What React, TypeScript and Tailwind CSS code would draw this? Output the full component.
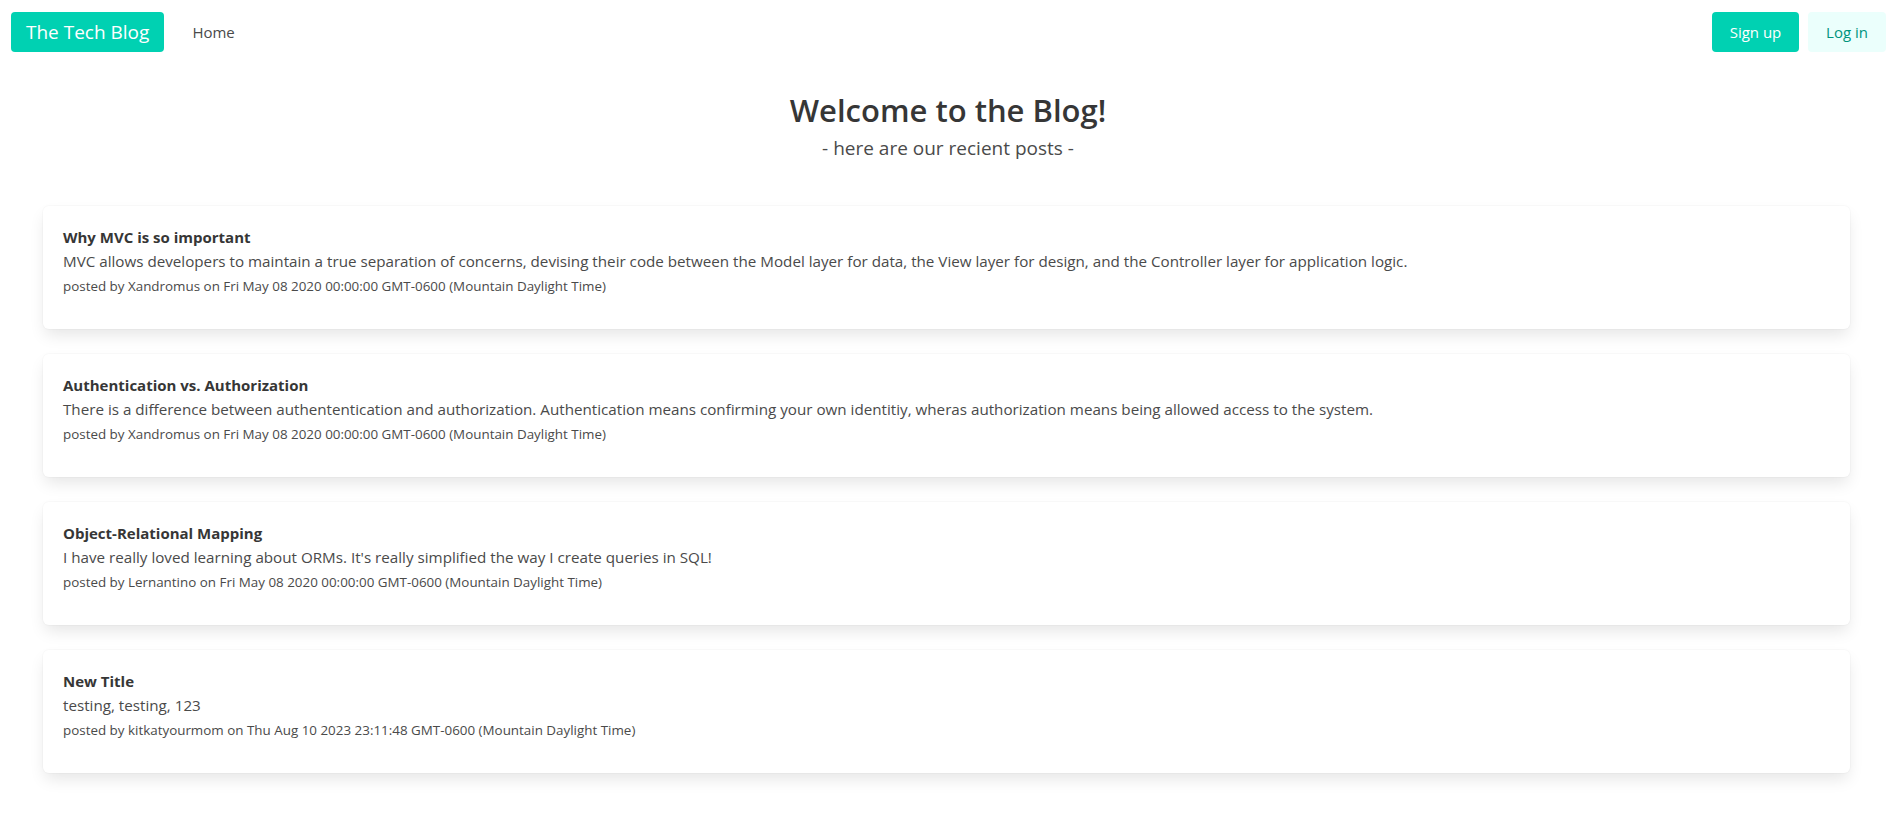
import React from 'react';

interface Post {
  title: string;
  body: string;
  author: string;
  date: string;
}

const posts: Post[] = [
  {
    title: 'Why MVC is so important',
    body: 'MVC allows developers to maintain a true separation of concerns, devising their code between the Model layer for data, the View layer for design, and the Controller layer for application logic.',
    author: 'Xandromus',
    date: 'Fri May 08 2020 00:00:00 GMT-0600 (Mountain Daylight Time)',
  },
  {
    title: 'Authentication vs. Authorization',
    body: 'There is a difference between authententication and authorization. Authentication means confirming your own identitiy, wheras authorization means being allowed access to the system.',
    author: 'Xandromus',
    date: 'Fri May 08 2020 00:00:00 GMT-0600 (Mountain Daylight Time)',
  },
  {
    title: 'Object-Relational Mapping',
    body: "I have really loved learning about ORMs. It's really simplified the way I create queries in SQL!",
    author: 'Lernantino',
    date: 'Fri May 08 2020 00:00:00 GMT-0600 (Mountain Daylight Time)',
  },
  {
    title: 'New Title',
    body: 'testing, testing, 123',
    author: 'kitkatyourmom',
    date: 'Thu Aug 10 2023 23:11:48 GMT-0600 (Mountain Daylight Time)',
  },
];

export default function App() {
  return (
    <main className="min-h-screen bg-white text-[#4a4a4a] font-['Open_Sans',sans-serif]">
      <nav className="flex items-center justify-between h-[64px] pl-[11px] pr-[10px]">
        <div className="flex items-center">
          <a className="h-10 px-[15px] rounded-[4px] bg-[#00d1b2] text-white text-[19px] flex items-center">
            The Tech Blog
          </a>
          <a className="ml-[28px] text-[15px] text-[#4a4a4a]">Home</a>
        </div>
        <div className="flex items-center gap-[9px]">
          <button className="h-10 w-[87px] rounded-[4px] bg-[#00d1b2] text-white text-[15px]">Sign up</button>
          <button className="h-10 w-[78px] rounded-[4px] bg-[#ebfffc] text-[#00947e] text-[15px]">Log in</button>
        </div>
      </nav>

      <section className="text-center pt-[26px]">
        <h1 className="text-[31px] leading-[40px] font-semibold text-[#363636]">Welcome to the Blog!</h1>
        <p className="mt-[4px] text-[19px] leading-[28px] text-[#4a4a4a]">- here are our recient posts -</p>
      </section>

      <section className="ml-[43px] mr-[46px] mt-[44px] flex flex-col gap-[25px]">
        {posts.map((post, index) => (
          <article
            key={index}
            className="bg-white rounded-[6px] px-[20px] pt-[19px] pb-[33px] shadow-[0_8px_16px_-2px_rgba(10,10,10,0.1),0_0_0_1px_rgba(10,10,10,0.02)]"
          >
            <h2 className="text-[15px] leading-6 font-bold text-[#363636]">{post.title}</h2>
            <p className="text-[15.2px] leading-6">{post.body}</p>
            <p className="mt-[3px] text-[13.4px] leading-5">
              posted by {post.author} on {post.date}
            </p>
          </article>
        ))}
      </section>
    </main>
  );
}
